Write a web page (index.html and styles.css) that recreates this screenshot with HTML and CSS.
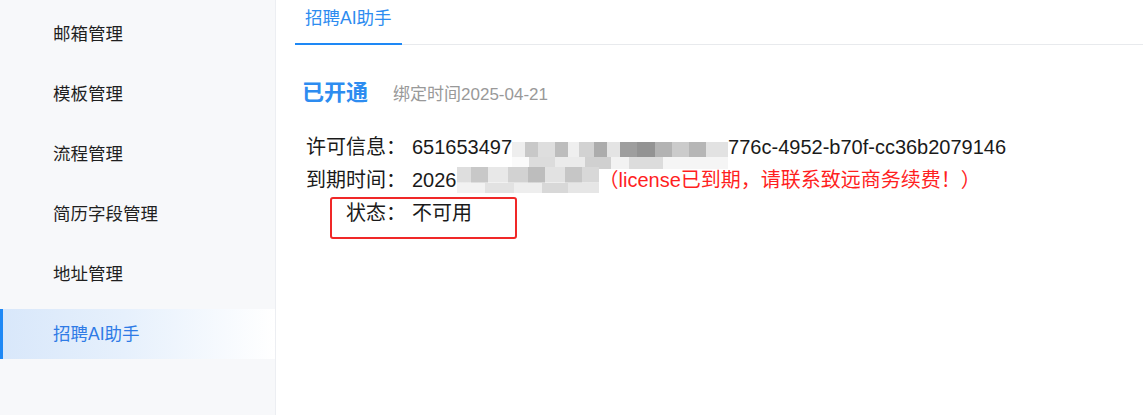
FILE: index.html
```html
<!DOCTYPE html>
<html lang="zh-CN">
<head>
<meta charset="utf-8">
<title>招聘AI助手</title>
<link rel="stylesheet" href="styles.css">
</head>
<body>
<div class="layout">
  <aside class="sidebar">
    <div class="menu-item">邮箱管理</div>
    <div class="menu-item">模板管理</div>
    <div class="menu-item">流程管理</div>
    <div class="menu-item">简历字段管理</div>
    <div class="menu-item">地址管理</div>
    <div class="menu-item active">招聘AI助手</div>
  </aside>
  <main class="main">
    <div class="tabs">
      <div class="tab active">招聘AI助手</div>
    </div>
    <div class="content">
      <div class="status-title">
        <span class="status">已开通</span>
        <span class="bind-time">绑定时间2025-04-21</span>
      </div>
      <div class="info">
        <div class="row">
          <span class="label">许可信息：</span>
          <span class="value">651653497<span class="mosaic mosaic-long"></span>776c-4952-b70f-cc36b2079146</span>
        </div>
        <div class="row">
          <span class="label">到期时间：</span>
          <span class="value">2026<span class="mosaic mosaic-short"></span><span class="warn">（license已到期，请联系致远商务续费！）</span></span>
        </div>
        <div class="row row-marked">
          <span class="label">状态：</span>
          <span class="value">不可用</span>
        </div>
      </div>
    </div>
  </main>
</div>
</body>
</html>
```

FILE: styles.css
```css
html, body {
  margin: 0;
  padding: 0;
  background: #fff;
}

body {
  font-family: "Liberation Sans", "Noto Sans CJK SC", sans-serif;
  color: #222;
}

.layout {
  display: flex;
  height: 415px;
  overflow: hidden;
}

.sidebar {
  width: 276px;
  flex: none;
  box-sizing: border-box;
  background: #f7f8fa;
  border-right: 1px solid #eceef2;
  padding-top: 9px;
}

.menu-item {
  height: 50px;
  line-height: 50px;
  padding-left: 53px;
  margin-bottom: 10px;
  font-size: 17.5px;
  color: #1f1f1f;
}

.menu-item.active {
  color: #2f7be6;
  background: linear-gradient(90deg, #d8e7fa 0%, #e6f0fc 45%, #ffffff 100%);
  box-shadow: inset 3px 0 0 #1e88f5;
}

.main {
  flex: 1;
  padding-left: 19px;
}

.tabs {
  display: flex;
  height: 44px;
  border-bottom: 1px solid #e8eaed;
}

.tab {
  padding: 0 10px;
  height: 43px;
  line-height: 36px;
  font-size: 17.5px;
  color: #2d8cf0;
}

.tab.active {
  border-bottom: 2px solid #1e88f5;
  margin-bottom: -1px;
}

.content {
  padding-left: 7px;
}

.status-title {
  margin-top: 33px;
  display: flex;
  align-items: baseline;
  gap: 25px;
  height: 30px;
  line-height: 30px;
}

.status {
  font-size: 22px;
  font-weight: bold;
  color: #2d8cf0;
}

.bind-time {
  font-size: 17px;
  color: #999;
}

.info {
  margin-top: 23px;
  padding-left: 4px;
}

.row {
  display: flex;
  font-size: 20px;
  line-height: 33px;
  color: #1a1a1a;
  white-space: nowrap;
}

.label {
  width: 100px;
  text-align: right;
  flex: none;
}

.value {
  margin-left: 6px;
}

.mosaic {
  display: inline-block;
  filter: blur(0.7px);
}

.mosaic-long {
  width: 216px;
  height: 33px;
  vertical-align: -10px;
  margin-bottom: -6px;
  background:
    linear-gradient(90deg, #eeeeee 0 6%, #c8c8c8 6% 12%, #dedede 12% 20%, #bdbdbd 20% 26%, #efefef 26% 31%, #d2d2d2 31% 38%, #acacac 38% 44%, #e4e4e4 44% 50%, #9e9e9e 50% 58%, #939393 58% 66%, #b3b3b3 66% 74%, #cbcbcb 74% 82%, #b6b6b6 82% 90%, #e2e2e2 90% 100%) 0 5px / 100% 15px no-repeat,
    linear-gradient(90deg, #fafafa 0 8%, #dcdcdc 8% 20%, #ebebeb 20% 34%, #d0d0d0 34% 46%, #f2f2f2 46% 54%, #dcdcdc 54% 70%, #f5f5f5 70% 100%) 0 20px / 100% 12px no-repeat;
}

.mosaic-short {
  width: 142px;
  height: 26px;
  vertical-align: -6px;
  background:
    linear-gradient(90deg, #dedede 0 10%, #c8c8c8 10% 22%, #e8e8e8 22% 36%, #d2d2d2 36% 50%, #bdbdbd 50% 62%, #e2e2e2 62% 76%, #c6c6c6 76% 88%, #d8d8d8 88% 100%) top / 100% 60% no-repeat,
    linear-gradient(90deg, #f2f2f2 0 20%, #e2e2e2 20% 40%, #eeeeee 40% 60%, #d8d8d8 60% 78%, #e6e6e6 78% 100%) bottom / 100% 40% no-repeat;
}

.warn {
  color: #ff1f1f;
}

.row-marked {
  position: relative;
}

.row-marked::after {
  content: "";
  position: absolute;
  left: 24px;
  top: 0;
  width: 187px;
  height: 42px;
  box-sizing: border-box;
  border: 2px solid #f02828;
  border-radius: 3px;
}
```
